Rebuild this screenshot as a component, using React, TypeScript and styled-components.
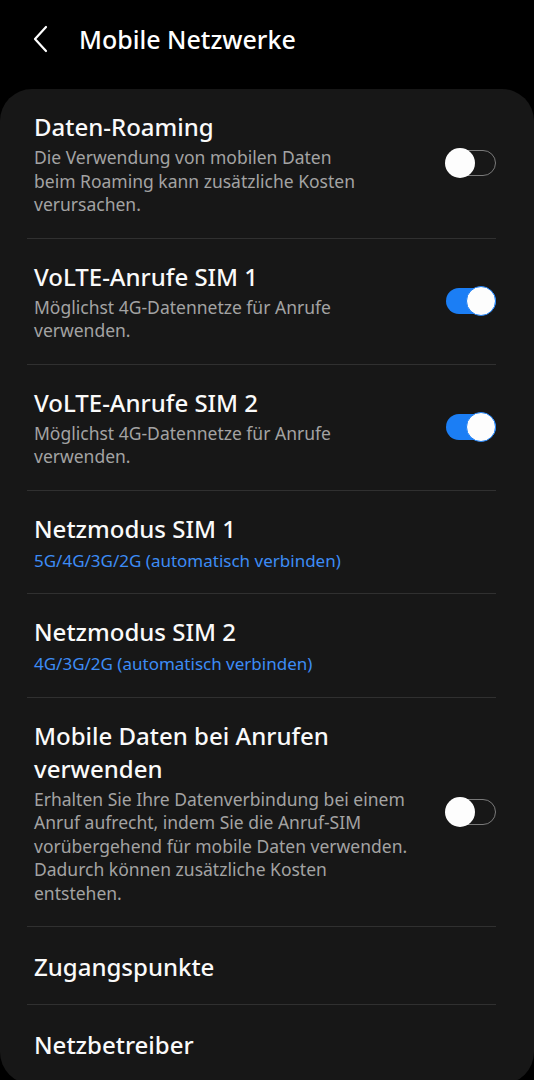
import React from "react";
import styled, {createGlobalStyle} from "styled-components";

const GlobalStyle = createGlobalStyle`
  html, body {
    margin: 0;
    padding: 0;
    background: #000;
  }
  body {
    font-family: "Noto Sans", "DejaVu Sans", sans-serif;
    -webkit-font-smoothing: antialiased;
  }
`;

type RowData = {
    title: string
    subtitle?: string
    accent?: boolean
    toggle?: boolean
    checked?: boolean
}

// line breaks follow the device's wrapping
const rows: RowData[] = [
    {
        title: 'Daten-Roaming',
        subtitle: 'Die Verwendung von mobilen Daten\nbeim Roaming kann zusätzliche Kosten\nverursachen.',
        toggle: true,
        checked: false,
    },
    {
        title: 'VoLTE-Anrufe SIM 1',
        subtitle: 'Möglichst 4G-Datennetze für Anrufe\nverwenden.',
        toggle: true,
        checked: true,
    },
    {
        title: 'VoLTE-Anrufe SIM 2',
        subtitle: 'Möglichst 4G-Datennetze für Anrufe\nverwenden.',
        toggle: true,
        checked: true,
    },
    {title: 'Netzmodus SIM 1', subtitle: '5G/4G/3G/2G (automatisch verbinden)', accent: true},
    {title: 'Netzmodus SIM 2', subtitle: '4G/3G/2G (automatisch verbinden)', accent: true},
    {
        title: 'Mobile Daten bei Anrufen\nverwenden',
        subtitle: 'Erhalten Sie Ihre Datenverbindung bei einem\nAnruf aufrecht, indem Sie die Anruf-SIM\nvorübergehend für mobile Daten verwenden.\nDadurch können zusätzliche Kosten\nentstehen.',
        toggle: true,
        checked: false,
    },
    {title: 'Zugangspunkte'},
    {title: 'Netzbetreiber'},
]

const BackIcon = () => (
    <svg width="18" height="28" viewBox="0 0 18 28" fill="none">
        <path d="M14 2 L3 14 L14 26" stroke="#fff" strokeWidth="2.2" strokeLinecap="round" strokeLinejoin="round"/>
    </svg>
)

export default function App() {
    return (
        <Screen>
            <GlobalStyle/>
            <Header>
                <BackButton><BackIcon/></BackButton>
                <HeaderTitle>Mobile Netzwerke</HeaderTitle>
            </Header>
            <Card>
                {rows.map((row, index) => (
                    <React.Fragment key={row.title}>
                        {index > 0 && <Divider/>}
                        <Row $single={!row.subtitle}>
                            <TextBlock>
                                <Title>{row.title}</Title>
                                {row.subtitle && <Subtitle $accent={!!row.accent}>{row.subtitle}</Subtitle>}
                            </TextBlock>
                            {row.toggle && (
                                <Switch $on={!!row.checked}>
                                    <Thumb $on={!!row.checked}/>
                                </Switch>
                            )}
                        </Row>
                    </React.Fragment>
                ))}
            </Card>
        </Screen>
    )
}

const Screen = styled.div`
  width: 534px;
  min-height: 1080px;
  background: #000;
  color: #fafafa;
  display: flex;
  flex-direction: column;
`;

const Header = styled.div`
  height: 89px;
  display: flex;
  align-items: center;
  padding: 0 0 12px 32px;
  box-sizing: border-box;
`;

const BackButton = styled.div`
  width: 47px;
  display: flex;
  align-items: center;
`;

const HeaderTitle = styled.h1`
  margin: 0;
  font-size: 25px;
  font-weight: 500;
  color: #fff;
`;

const Card = styled.div`
  background: #171717;
  border-radius: 32px;
  padding-bottom: 2px;
  display: flex;
  flex-direction: column;
`;

const Divider = styled.div`
  height: 1px;
  background: #303030;
  margin: 0 38px 0 27px;
`;

const Row = styled.div<{ $single: boolean }>`
  display: flex;
  align-items: center;
  justify-content: space-between;
  padding: ${p => p.$single ? '23px 38px 21px 34px' : '21px 38px 21px 34px'};
`;

const TextBlock = styled.div`
  display: flex;
  flex-direction: column;
  gap: 3px;
`;

const Title = styled.div`
  font-size: 24px;
  line-height: 33px;
  font-weight: 500;
  color: #fafafa;
  white-space: pre-line;
`;

const Subtitle = styled.div<{ $accent: boolean }>`
  font-size: ${p => p.$accent ? '17px' : '17.5px'};
  line-height: 23.5px;
  margin-top: ${p => p.$accent ? '1px' : '0'};
  color: ${p => p.$accent ? '#3d8cf5' : '#a3a3a3'};
  white-space: pre-line;
`;

const Switch = styled.div<{ $on: boolean }>`
  position: relative;
  flex-shrink: 0;
  width: 50px;
  height: 26px;
  border-radius: 13px;
  box-sizing: border-box;
  background: ${p => p.$on ? '#1b7ef5' : 'transparent'};
  border: ${p => p.$on ? 'none' : '1.5px solid #7a7a7a'};
  margin-left: 20px;
`;

const Thumb = styled.div<{ $on: boolean }>`
  position: absolute;
  top: 50%;
  ${p => p.$on ? 'right: 0;' : 'left: -2px;'}
  width: 30px;
  height: 30px;
  margin-top: -15px;
  border-radius: 50%;
  background: #fdfdfd;
  box-sizing: border-box;
  border: ${p => p.$on ? '1.5px solid #1b7ef5' : 'none'};
`;
